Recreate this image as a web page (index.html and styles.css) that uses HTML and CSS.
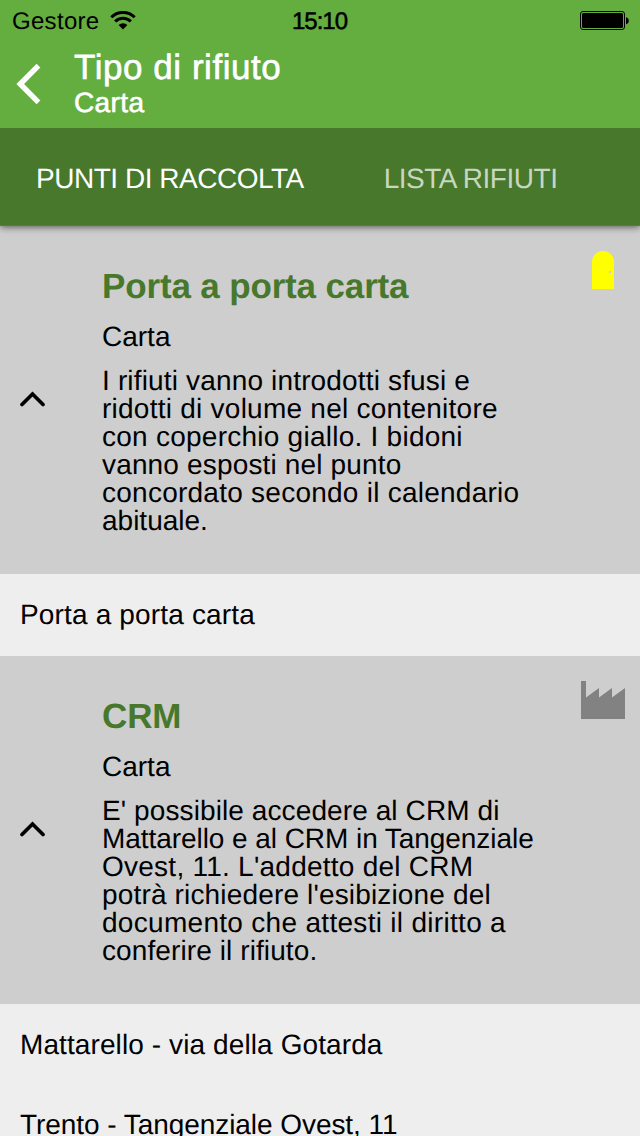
FILE: index.html
```html
<!DOCTYPE html>
<html lang="it">
<head>
<meta charset="utf-8">
<title>Tipo di rifiuto</title>
<link rel="stylesheet" href="styles.css">
</head>
<body>
<div class="screen">
  <header class="header">
    <div class="status">
      <div class="carrier"><span class="carrier-name">Gestore</span>
        <svg class="wifi" width="26" height="20" viewBox="0 0 26 20"><g fill="none" stroke="#000" stroke-width="3"><path d="M1.300 6.300a16.500 16.500 0 0 1 23.400 0"/><path d="M5.200 10.500a11 11 0 0 1 15.600 0"/></g><path d="M8.600 14a6.200 6.200 0 0 1 8.800 0L13 18.600z"/></svg>
      </div>
      <span class="time">15:10</span>
      <svg class="battery" width="50" height="20" viewBox="0 0 50 20"><rect x=".5" y=".5" width="44" height="18" rx="2.5" fill="none" stroke="#000"/><rect x="2" y="2" width="41" height="15" rx="1.5"/><path d="M46 6.200c3.700.6 3.700 6.400 0 7z"/></svg>
    </div>
    <div class="nav">
      <svg class="back" width="26" height="42" viewBox="0 0 26 42"><path d="M23.500 2.700L5.200 21l18.300 18.300" fill="none" stroke="#fff" stroke-width="5.4"/></svg>
      <div class="titles"><h1 class="title">Tipo di rifiuto</h1><div class="subtitle">Carta</div></div>
    </div>
  </header>
  <nav class="tabs">
    <span class="tab tab-active">PUNTI DI RACCOLTA</span>
    <span class="tab tab-second">LISTA RIFIUTI</span>
  </nav>
  <main class="list">
    <section class="group">
      <svg class="chevron" width="26" height="16" viewBox="0 0 26 16"><path d="M2 13.500L12.500 3 23 13.500" fill="none" stroke="#000" stroke-width="3.7" stroke-linecap="round"/></svg>
      <div class="details">
        <h2 class="name">Porta a porta carta</h2>
        <p class="kind">Carta</p>
        <p class="text"><span class="loose">I rifiuti vanno introdotti sfusi e</span><br><span class="looser">ridotti di volume nel contenitore</span><br><span class="looser">con coperchio giallo. I bidoni</span><br><span class="loose">vanno esposti nel punto</span><br><span class="looser">concordato secondo il calendario</span><br>abituale.</p>
      </div>
      <svg class="icon icon-door" width="22" height="38" viewBox="0 0 22 38"><path d="M0 38V11a11 11 0 0 1 22 0v27z" fill="#ff0"/><rect x="17" y="20" width="2" height="2" fill="#cecece"/></svg>
    </section>
    <div class="place loose">Porta a porta carta</div>
    <section class="group">
      <svg class="chevron" width="26" height="16" viewBox="0 0 26 16"><path d="M2 13.500L12.500 3 23 13.500" fill="none" stroke="#000" stroke-width="3.7" stroke-linecap="round"/></svg>
      <div class="details">
        <h2 class="name">CRM</h2>
        <p class="kind">Carta</p>
        <p class="text"><span class="slight">E' possibile accedere al CRM di</span><br><span class="tight">Mattarello e al CRM in Tangenziale</span><br><span class="looser">Ovest, 11. L'addetto del CRM</span><br><span class="loose">potrà richiedere l'esibizione del</span><br><span class="loosest">documento che attesti il diritto a</span><br><span class="slight">conferire il rifiuto.</span></p>
      </div>
      <svg class="icon icon-factory" width="44" height="38" viewBox="0 0 44 38"><path d="M0 38V0h5v16.500L18 7v9.500L31 7v9.500L44 7v31z" fill="#828282"/></svg>
    </section>
    <div class="place slight">Mattarello - via della Gotarda</div>
    <div class="place place-next tight">Trento - Tangenziale Ovest, 11</div>
  </main>
</div>
</body>
</html>
```
FILE: styles.css
```css
* { box-sizing: border-box; }
body { margin: 0; }
h1, h2, p { margin: 0; }
svg { display: block; flex: none; }
.screen {
  width: 640px; height: 1136px; overflow: hidden;
  display: flex; flex-direction: column;
  background: #eee; color: #000;
  font: 28px/28px "Liberation Sans", Helvetica, Arial, sans-serif;
  text-rendering: geometricPrecision;
  white-space: nowrap;
}
.header { height: 128px; flex: none; background: #64ad3f; z-index: 2; }
.status {
  height: 40px; padding: 0 10px 0 12px;
  display: grid; grid-template-columns: 1fr auto 1fr; align-items: center;
  font-size: 24px; line-height: 24px;
}
.carrier { display: flex; align-items: center; gap: 11px; }
.carrier-name { padding-top: 3px; letter-spacing: .3px; }
.wifi { margin-top: 2px; }
.time { padding-top: 3px; -webkit-text-stroke: .5px #000; letter-spacing: -1px; margin-left: -3px; }
.battery { justify-self: end; margin-top: 2px; }
.nav { display: flex; padding-left: 15px; color: #fff; }
.back { margin-top: 23px; }
.titles { padding: 11px 0 0 33px; }
.title { font-size: 35px; line-height: 34px; font-weight: 400; letter-spacing: .55px; -webkit-text-stroke: .6px #fff; }
.subtitle { margin-top: 4px; letter-spacing: .4px; -webkit-text-stroke: .6px #fff; }
.tabs {
  height: 98px; flex: none; padding: 37px 36px 0; display: flex; gap: 80px;
  background: #47782b; border-bottom: 1px solid #2b9150;
  color: #fff; box-shadow: 0 1px 7px rgba(0,0,0,.6); z-index: 1;
}
.tab { letter-spacing: -.48px; }
.tab-second { color: #c8d6c0; }
.group { height: 348px; display: flex; align-items: flex-start; background: #cecece; }
.chevron { margin: 165px 0 0 20px; }
.details { flex: 1; padding: 44px 0 0 56px; }
.name { font-size: 35px; line-height: 34px; font-weight: 700; letter-spacing: -.15px; color: #47782b; }
.kind { margin-top: 19px; }
.text { margin-top: 16px; }
.tight { letter-spacing: -.06px; }
.slight { letter-spacing: .1px; }
.loose { letter-spacing: .16px; }
.looser { letter-spacing: .25px; }
.loosest { letter-spacing: .3px; }
.icon-door { margin: 25px 26px 0 0; }
.icon-factory { margin: 25px 15px 0 0; }
.place { height: 82px; padding: 27px 20px 0; }
.place-next { padding-top: 25px; }
```
